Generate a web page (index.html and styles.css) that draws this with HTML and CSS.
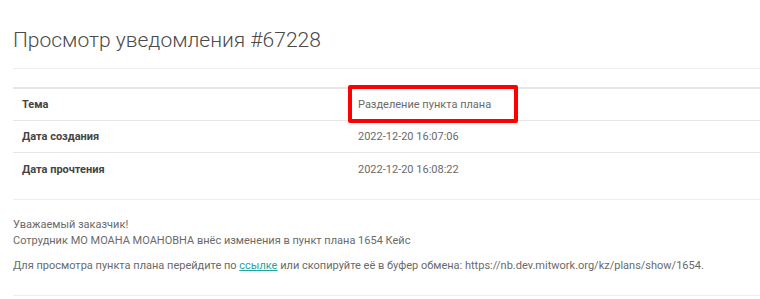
FILE: index.html
```html
<!DOCTYPE html>
<html lang="ru">
<head>
<meta charset="utf-8">
<link rel="stylesheet" href="styles.css">
</head>
<body>
<div class="card">
  <h1 class="title">Просмотр уведомления #67228</h1>
  <table class="info">
    <tr>
      <th>Тема</th>
      <td class="value"><span class="highlight">Разделение пункта плана</span></td>
    </tr>
    <tr>
      <th>Дата создания</th>
      <td class="value">2022-12-20 16:07:06</td>
    </tr>
    <tr class="last">
      <th>Дата прочтения</th>
      <td class="value">2022-12-20 16:08:22</td>
    </tr>
  </table>
  <div class="message">
    <p class="greet">Уважаемый заказчик!<br>Сотрудник МО МОАНА МОАНОВНА внёс изменения в пункт плана 1654 Кейс</p>
    <p class="link-line">Для просмотра пункта плана перейдите по <a href="#">ссылке</a> или скопируйте её в буфер обмена: https://nb.dev.mitwork.org/kz/plans/show/1654.</p>
  </div>
</div>
</body>
</html>
```
FILE: styles.css
```css
html, body {
  margin: 0;
  padding: 0;
  background: #ffffff;
}
body {
  font-family: Roboto, "Noto Sans", sans-serif;
  color: #666;
  overflow: hidden;
}
.card {
  padding-left: 13px;
}
.title {
  margin: 0;
  padding-top: 27px;
  height: 41px;
  font-size: 21px;
  font-weight: 300;
  color: #4a4a4a;
  line-height: 26px;
  border-bottom: 1px solid #eeeeee;
}
.info {
  margin-top: 18px;
  width: 100%;
  border-collapse: collapse;
  border-top: 2px solid #e6e6e6;
  font-size: 11px;
}
.info th {
  text-align: left;
  font-weight: 700;
  color: #444;
  width: 318px;
  padding: 0 9px;
  height: 31px;
}
.info td {
  padding: 0 9px;
  height: 31px;
  color: #6a6a6a;
}
.info tr {
  border-bottom: 1px solid #e6e6e6;
}
.info tr.last {
  border-bottom: none;
}
.info tr.last th,
.info tr.last td {
  height: 32px;
}
.highlight {
  position: relative;
}
.highlight::after {
  content: "";
  position: absolute;
  left: -10px;
  right: -27px;
  top: -13px;
  bottom: -12px;
  border: 4px solid #ff0000;
  border-radius: 2px;
}
.message {
  margin-top: 14px;
  border-top: 1px solid #eeeeee;
  border-bottom: 1px solid #eeeeee;
  padding: 17px 0 21px;
  font-size: 11px;
  color: #6a6a6a;
}
.message p {
  margin: 0;
  line-height: 16px;
}
.message .link-line {
  margin-top: 9px;
}
.message a {
  color: #26a69a;
  text-decoration: underline;
}
```
